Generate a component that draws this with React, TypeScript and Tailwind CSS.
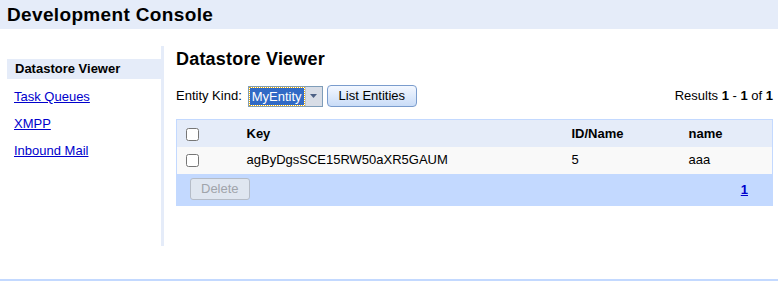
export default function App() {
  return (
    <div className="w-[778px] h-[281px] bg-white font-['Liberation_Sans',Arial,sans-serif] text-[13px] text-black overflow-hidden relative">
      <div className="h-[29px] bg-[#e5ecf9] pl-[7px] pt-[4px]">
        <h1 className="text-[19px] font-bold leading-[22px] tracking-[0.35px]">Development Console</h1>
      </div>

      <div className="flex mt-[17px]">
        <div className="w-[164px] pl-[7px] pt-[13px] h-[200px] border-r-[3px] border-[#e5ecf9]">
          <div className="h-[20px] bg-[#e5ecf9] pl-[8px] font-bold leading-[20px]">Datastore Viewer</div>
          <ul className="pl-[7px]">
            <li className="mt-[8px] leading-[19px]"><a href="#" className="text-[#0000cc] underline">Task Queues</a></li>
            <li className="mt-[8px] leading-[19px]"><a href="#" className="text-[#0000cc] underline">XMPP</a></li>
            <li className="mt-[8px] leading-[19px]"><a href="#" className="text-[#0000cc] underline">Inbound Mail</a></li>
          </ul>
        </div>

        <div className="flex-1 pl-[12px] pr-[5px]">
          <h2 className="text-[18px] font-bold leading-[20px] mt-[3px] tracking-[0.2px]">Datastore Viewer</h2>

          <div className="flex items-center mt-[16px] h-[22px]">
            <span className="mr-[6px]">Entity Kind:</span>
            <div className="flex h-[21px] border border-[#7f9db9] bg-white">
              <span className="bg-[#316ac5] text-white px-[2px] m-[1px] leading-[17px] outline-1 outline-dotted outline-[#f0b000]">MyEntity</span>
              <span className="w-[17px] bg-[#d8dde6] border-l border-[#b9c3d4] flex items-center justify-center">
                <svg width="7" height="4" viewBox="0 0 7 4"><path d="M0 0h7L3.5 4z" fill="#4d6185" /></svg>
              </span>
            </div>
            <button className="ml-[4px] h-[22px] px-[11px] rounded-[4px] border border-[#7a9ccd] bg-gradient-to-b from-[#f4f8ff] to-[#c9dcf7] leading-[18px]">List Entities</button>
            <div className="ml-auto">
              Results <b>1</b> - <b>1</b> of <b>1</b>
            </div>
          </div>

          <table className="w-full mt-[12px] border border-[#c3d9ff] border-collapse">
            <thead>
              <tr className="bg-[#e5ecf9] h-[27px] text-left">
                <th className="w-[70px] pl-[9px]"><input type="checkbox" className="align-middle w-[13px] h-[13px]" /></th>
                <th className="font-bold">Key</th>
                <th className="w-[117px] font-bold">ID/Name</th>
                <th className="w-[84px] font-bold">name</th>
              </tr>
            </thead>
            <tbody>
              <tr className="bg-[#f9f9f9] h-[27px]">
                <td className="pl-[9px]"><input type="checkbox" className="align-middle w-[13px] h-[13px]" /></td>
                <td>agByDgsSCE15RW50aXR5GAUM</td>
                <td>5</td>
                <td>aaa</td>
              </tr>
              <tr className="bg-[#c3d9ff] h-[32px]">
                <td colSpan={3} className="pl-[13px]">
                  <button disabled className="h-[22px] px-[10px] rounded-[3px] border border-[#b5bcc7] bg-[#dfe6f0] text-[#a0a4aa] leading-[20px]">Delete</button>
                </td>
                <td className="text-right pr-[24px]">
                  <a href="#" className="text-[#0000cc] underline font-bold">1</a>
                </td>
              </tr>
            </tbody>
          </table>
        </div>
      </div>

      <div className="absolute left-0 right-0 bottom-0 h-[2px] bg-[#c3d9ff]" />
    </div>
  );
}
